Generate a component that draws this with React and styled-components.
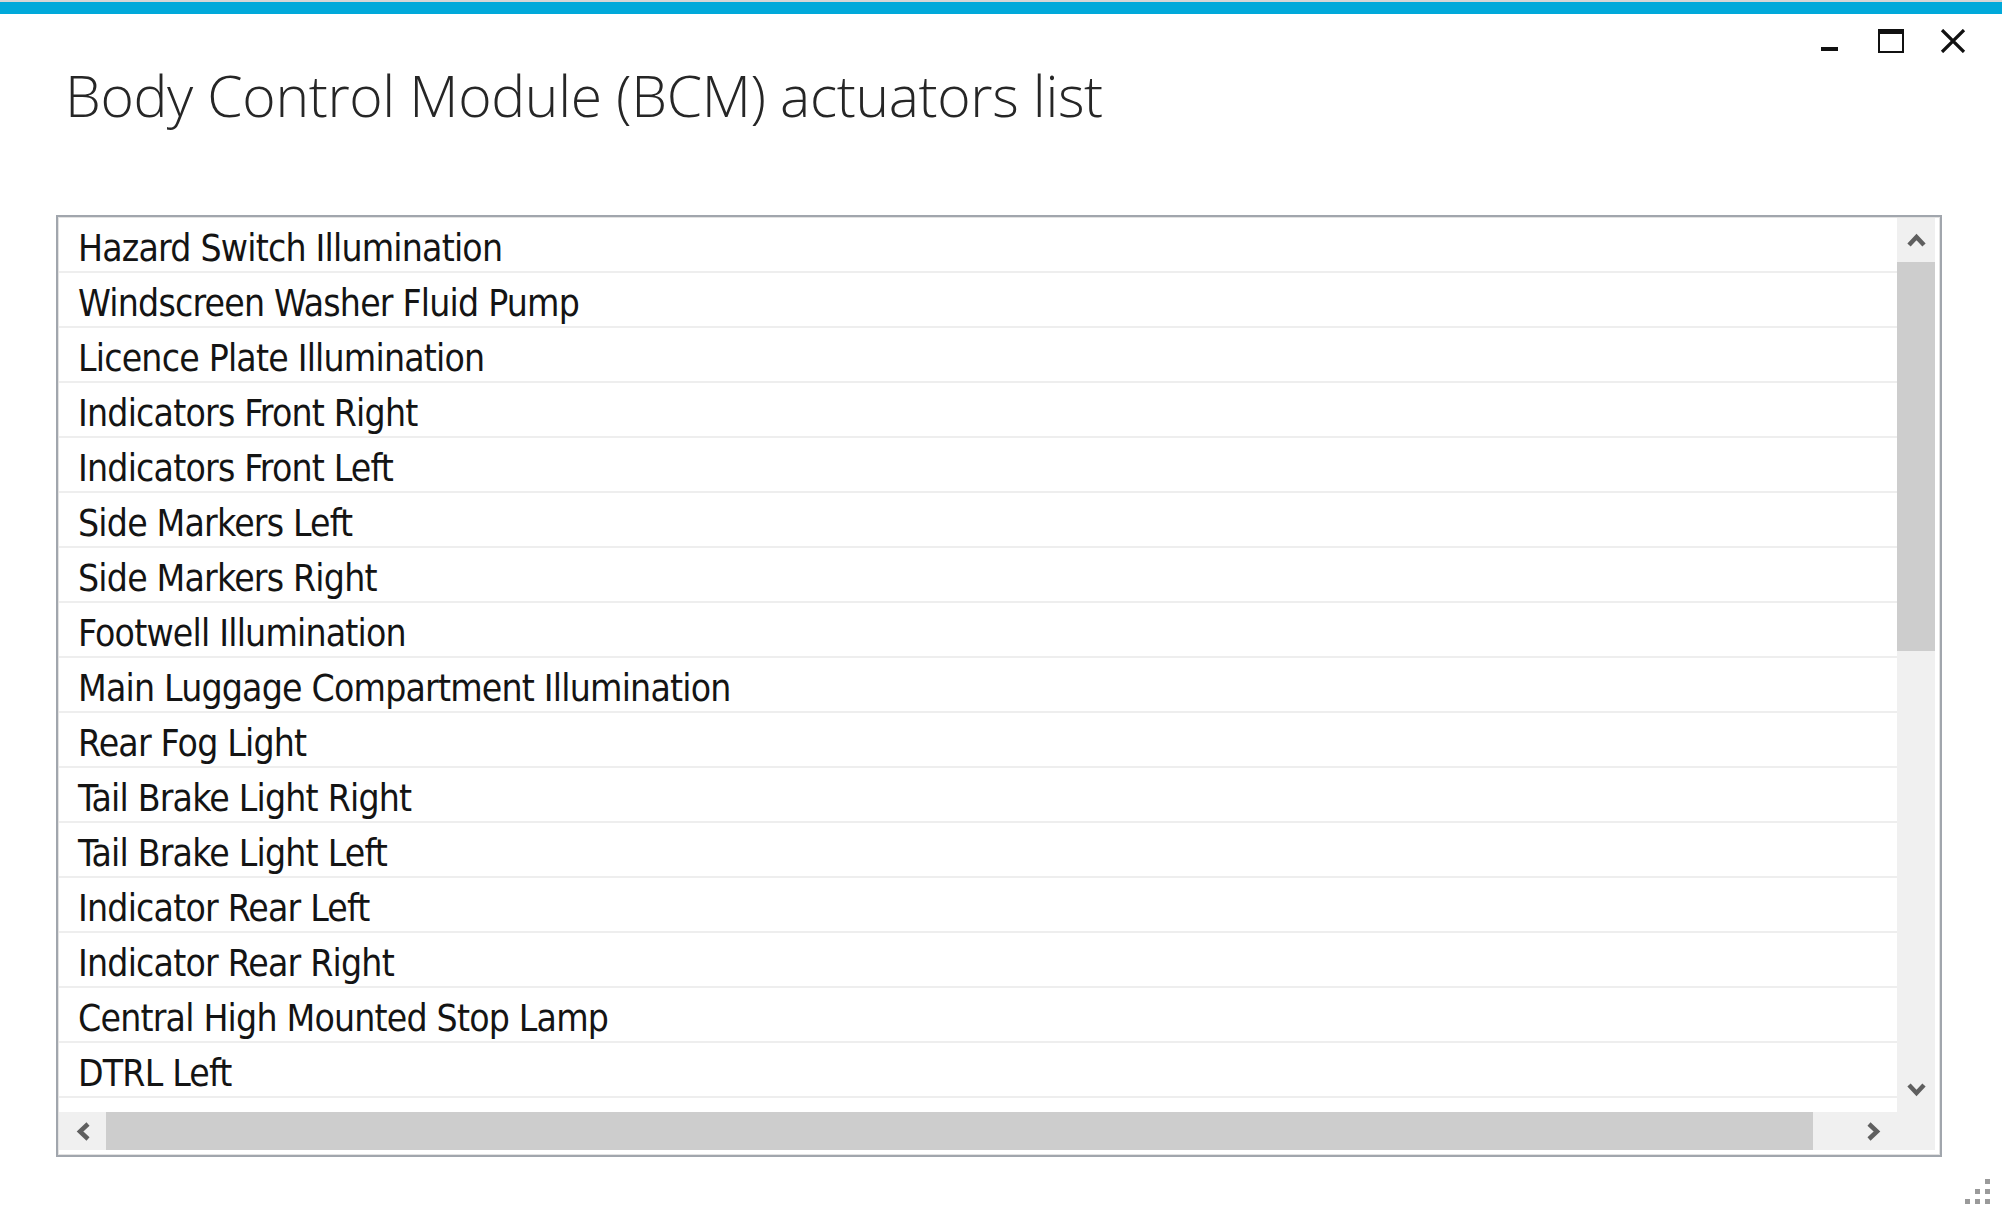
import React from "react";
import styled, { createGlobalStyle } from "styled-components";

const GlobalStyle = createGlobalStyle`
  html, body {
    margin: 0;
    padding: 0;
    background: #ffffff;
  }
  * {
    box-sizing: border-box;
  }
`;

const ACTUATORS = [
  "Hazard Switch Illumination",
  "Windscreen Washer Fluid Pump",
  "Licence Plate Illumination",
  "Indicators Front Right",
  "Indicators Front Left",
  "Side Markers Left",
  "Side Markers Right",
  "Footwell Illumination",
  "Main Luggage Compartment Illumination",
  "Rear Fog Light",
  "Tail Brake Light Right",
  "Tail Brake Light Left",
  "Indicator Rear Left",
  "Indicator Rear Right",
  "Central High Mounted Stop Lamp",
  "DTRL Left",
];

const Window = styled.div`
  position: relative;
  width: 100%;
  height: 1215px;
  display: flex;
  flex-direction: column;
  border-top: 2px solid #d6d6d6;
  overflow: hidden;
`;

const AccentBar = styled.div`
  height: 12px;
  background: #00a9da;
  flex: none;
`;

const Header = styled.div`
  display: flex;
  justify-content: space-between;
  align-items: flex-start;
  height: 201px;
  flex: none;
`;

const Title = styled.h1`
  margin: 53px 0 0 65px;
  font-family: "Open Sans", "Segoe UI", sans-serif;
  font-weight: 300;
  font-size: 57px;
  line-height: 1;
  color: #262626;
  letter-spacing: -0.35px;
`;

const Controls = styled.div`
  display: flex;
  padding-right: 18px;
`;

const ControlButton = styled.button`
  width: 62px;
  height: 54px;
  display: flex;
  align-items: center;
  justify-content: center;
  border: none;
  background: transparent;
  padding: 0;
  color: #111111;
  cursor: pointer;
`;

const ListBox = styled.div`
  margin-left: 56px;
  width: 1886px;
  height: 942px;
  border: 2px solid #a1a6ad;
  box-shadow: inset 0 0 0 1px #e2e2e2;
  padding: 1px 5px 5px 1px;
  display: grid;
  grid-template-columns: 1fr 38px;
  grid-template-rows: 1fr 38px;
  background: #ffffff;
  flex: none;
`;

const Viewport = styled.div`
  overflow: hidden;
  background: #ffffff;
`;

const Row = styled.div`
  height: 55px;
  padding: 9px 0 0 19px;
  line-height: 44px;
  border-bottom: 2px solid #eeeeee;
  font-family: "DejaVu Sans Condensed", "DejaVu Sans", sans-serif;
  font-size: 37px;
  letter-spacing: -0.8px;
  color: #141414;
  white-space: nowrap;
`;

const VScroll = styled.div`
  display: flex;
  flex-direction: column;
  background: #f0f0f0;
`;

const HScroll = styled.div`
  display: flex;
  background: #f0f0f0;
`;

const Corner = styled.div`
  background: #f0f0f0;
`;

const ArrowCell = styled.div`
  flex: none;
  width: ${(p) => p.$w || "100%"};
  height: ${(p) => p.$h || "100%"};
  display: flex;
  align-items: center;
  justify-content: center;
  color: #5f5f5f;
`;

const VThumb = styled.div`
  flex: none;
  height: ${(p) => p.$size}px;
  background: #cdcdcd;
`;

const HThumb = styled.div`
  flex: none;
  width: ${(p) => p.$size}px;
  background: #cdcdcd;
`;

const Track = styled.div`
  flex: 1;
`;

const Grip = styled.svg`
  position: absolute;
  right: 11px;
  bottom: 10px;
`;

const Chevron = ({ dir }) => {
  const paths = {
    up: "M3 13 L10.5 5 L18 13",
    down: "M3 3 L10.5 11 L18 3",
    left: "M13 3 L5 10.5 L13 18",
    right: "M3 3 L11 10.5 L3 18",
  };
  const vertical = dir === "up" || dir === "down";
  return (
    <svg
      width={vertical ? 21 : 16}
      height={vertical ? 16 : 21}
      viewBox={vertical ? "0 0 21 16" : "0 0 16 21"}
    >
      <path
        d={paths[dir]}
        fill="none"
        stroke="currentColor"
        strokeWidth="4.5"
        strokeLinejoin="miter"
      />
    </svg>
  );
};

export default function App() {
  return (
    <>
      <GlobalStyle />
      <Window>
        <AccentBar />
        <Header>
          <Title>Body Control Module (BCM) actuators list</Title>
          <Controls>
            <ControlButton aria-label="Minimize">
              <svg width="26" height="24" viewBox="0 0 26 24">
                <rect x="5" y="18" width="17" height="4" fill="currentColor" />
              </svg>
            </ControlButton>
            <ControlButton aria-label="Maximize">
              <svg width="26" height="24" viewBox="0 0 26 24">
                <rect x="1" y="1" width="24" height="22" fill="none" stroke="currentColor" strokeWidth="2" />
                <rect x="1" y="1" width="24" height="4" fill="currentColor" />
              </svg>
            </ControlButton>
            <ControlButton aria-label="Close">
              <svg width="26" height="24" viewBox="0 0 26 24">
                <path d="M2 1 L24 23 M24 1 L2 23" stroke="currentColor" strokeWidth="3.2" />
              </svg>
            </ControlButton>
          </Controls>
        </Header>

        <ListBox>
          <Viewport>
            {ACTUATORS.map((name) => (
              <Row key={name}>{name}</Row>
            ))}
          </Viewport>
          <VScroll>
            <ArrowCell $h="44px">
              <Chevron dir="up" />
            </ArrowCell>
            <VThumb $size={389} />
            <Track />
            <ArrowCell $h="44px">
              <Chevron dir="down" />
            </ArrowCell>
          </VScroll>
          <HScroll>
            <ArrowCell $w="47px">
              <Chevron dir="left" />
            </ArrowCell>
            <HThumb $size={1707} />
            <Track />
            <ArrowCell $w="46px">
              <Chevron dir="right" />
            </ArrowCell>
          </HScroll>
          <Corner />
        </ListBox>

        <Grip width="26" height="26" viewBox="0 0 26 26">
          {[
            [20, 0],
            [10, 10],
            [20, 10],
            [0, 20],
            [10, 20],
            [20, 20],
          ].map(([x, y]) => (
            <rect key={`${x}-${y}`} x={x} y={y} width="5" height="5" fill="#9a9a9a" />
          ))}
        </Grip>
      </Window>
    </>
  );
}
